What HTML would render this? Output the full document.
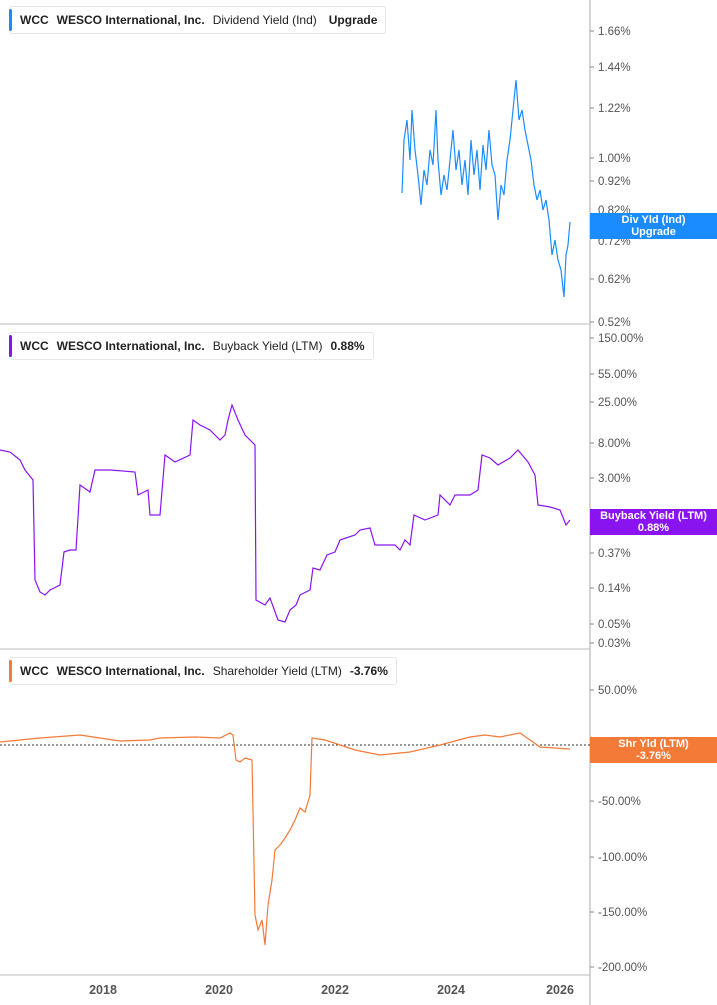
<!DOCTYPE html>
<html><head><meta charset="utf-8"><style>
body{margin:0;width:717px;height:1005px;background:#fff;font-family:"Liberation Sans",sans-serif;overflow:hidden;position:relative}
.lg{position:absolute;left:9px;height:26px;border:1px solid #e6e6e6;border-radius:3px;background:#fff;font-size:12px;letter-spacing:0;line-height:26px;white-space:nowrap;padding:0 8px 0 10px;color:#222}
.lg:before{content:"";position:absolute;left:-1px;top:2px;bottom:2px;width:3px;border-radius:2px;background:var(--c)}
.lg b{margin-right:8px}
.tag{position:absolute;left:590px;width:127px;color:#fff;font-size:11px;font-weight:bold;text-align:center;line-height:12px;padding-top:1px}
</style></head><body>
<svg width="717" height="1005" style="position:absolute;left:0;top:0" font-family="Liberation Sans" font-size="11.5" fill="#555">
<line x1="590" y1="0" x2="590" y2="1005" stroke="#aaa"/>
<line x1="0" y1="324" x2="590" y2="324" stroke="#bbb"/>
<line x1="0" y1="649" x2="590" y2="649" stroke="#bbb"/>
<line x1="0" y1="975" x2="590" y2="975" stroke="#bbb"/>
<line x1="0" y1="745" x2="590" y2="745" stroke="#333" stroke-dasharray="2,2"/>
<g stroke="#888"><line x1="590" y1="31" x2="594" y2="31"/><line x1="590" y1="67" x2="594" y2="67"/><line x1="590" y1="108" x2="594" y2="108"/><line x1="590" y1="158" x2="594" y2="158"/><line x1="590" y1="181" x2="594" y2="181"/><line x1="590" y1="279" x2="594" y2="279"/><line x1="590" y1="322" x2="594" y2="322"/><line x1="590" y1="338" x2="594" y2="338"/><line x1="590" y1="374" x2="594" y2="374"/><line x1="590" y1="402" x2="594" y2="402"/><line x1="590" y1="443" x2="594" y2="443"/><line x1="590" y1="478" x2="594" y2="478"/><line x1="590" y1="553" x2="594" y2="553"/><line x1="590" y1="588" x2="594" y2="588"/><line x1="590" y1="624" x2="594" y2="624"/><line x1="590" y1="643" x2="594" y2="643"/><line x1="590" y1="690" x2="594" y2="690"/><line x1="590" y1="801" x2="594" y2="801"/><line x1="590" y1="857" x2="594" y2="857"/><line x1="590" y1="912" x2="594" y2="912"/><line x1="590" y1="967" x2="594" y2="967"/></g>
<g>
<text x="598" y="35">1.66%</text><text x="598" y="71">1.44%</text><text x="598" y="112">1.22%</text><text x="598" y="162">1.00%</text><text x="598" y="185">0.92%</text><text x="598" y="214">0.82%</text><text x="598" y="245">0.72%</text><text x="598" y="283">0.62%</text><text x="598" y="326">0.52%</text>
<text x="598" y="342">150.00%</text><text x="598" y="378">55.00%</text><text x="598" y="406">25.00%</text><text x="598" y="447">8.00%</text><text x="598" y="482">3.00%</text><text x="598" y="557">0.37%</text><text x="598" y="592">0.14%</text><text x="598" y="628">0.05%</text><text x="598" y="647">0.03%</text>
<text x="598" y="694">50.00%</text><text x="598" y="749">0.00%</text><text x="598" y="805">-50.00%</text><text x="598" y="861">-100.00%</text><text x="598" y="916">-150.00%</text><text x="598" y="971">-200.00%</text>
</g>
<g font-size="12.5" font-weight="bold" fill="#555" text-anchor="middle">
<text x="103" y="994">2018</text><text x="219" y="994">2020</text><text x="335" y="994">2022</text><text x="451" y="994">2024</text><text x="560" y="994">2026</text>
</g>
<polyline fill="none" stroke="#1a8cff" stroke-width="1.2" points="402,193 404,140 407,120 410,160 412,110 415,150 418,175 421,205 424,170 427,185 430,150 433,165 436,110 438,160 441,195 444,175 447,190 450,160 453,130 456,170 459,150 462,185 465,160 468,195 471,140 474,175 477,150 480,190 483,145 486,170 489,130 492,165 495,175 498,220 501,185 504,195 507,160 510,140 513,110 516,80 519,120 522,110 525,130 528,145 531,160 534,185 537,200 540,190 543,210 546,200 549,220 552,255 555,240 558,260 561,270 564,297 566,255 568,245 570,222"/>
<polyline fill="none" stroke="#8a14f0" stroke-width="1.2" points="0,450 10,452 20,460 25,470 33,480 35,580 40,592 45,595 50,590 60,585 64,552 70,550 76,550 80,485 90,492 95,470 110,470 135,472 138,495 148,490 150,515 160,515 165,455 175,462 190,455 193,420 200,425 210,430 220,440 225,435 228,420 232,405 238,420 245,435 255,445 256,600 265,605 270,598 278,620 285,622 290,610 296,605 300,595 310,590 313,568 320,570 327,555 335,552 340,540 355,535 360,530 370,528 375,545 395,545 400,550 405,540 410,545 414,515 425,520 438,515 440,495 450,505 455,495 470,495 478,490 482,455 490,458 498,465 510,458 518,450 528,462 535,475 538,505 550,507 560,510 566,525 570,520"/>
<polyline fill="none" stroke="#f47a38" stroke-width="1.2" points="0,742 20,740 40,738 80,735 100,738 120,741 150,740 160,738 195,737 220,738 230,733 233,735 236,760 240,762 245,758 252,760 255,915 258,930 262,920 265,945 268,905 272,880 275,850 280,845 285,838 290,830 295,820 300,808 305,812 310,795 312,738 325,740 340,745 355,750 380,755 410,752 440,745 470,737 485,735 500,737 520,733 530,740 540,747 570,749"/>
</svg>
<div class="lg" style="top:6px;--c:#1a8cff"><b>WCC</b><b>WESCO International, Inc.</b><span style="margin-right:12px">Dividend Yield (Ind)</span><b style="margin:0">Upgrade</b></div>
<div class="lg" style="top:332px;--c:#8a14f0"><b>WCC</b><b>WESCO International, Inc.</b><span style="margin-right:8px">Buyback Yield (LTM)</span><b style="margin:0">0.88%</b></div>
<div class="lg" style="top:657px;--c:#f47a38"><b>WCC</b><b>WESCO International, Inc.</b><span style="margin-right:8px">Shareholder Yield (LTM)</span><b style="margin:0">-3.76%</b></div>
<div class="tag" style="top:213px;height:25px;background:#1a8cff">Div Yld (Ind)<br>Upgrade</div>
<div class="tag" style="top:509px;height:25px;background:#8a14f0">Buyback Yield (LTM)<br>0.88%</div>
<div class="tag" style="top:737px;height:25px;background:#f47a38">Shr Yld (LTM)<br>-3.76%</div>
</body></html>
